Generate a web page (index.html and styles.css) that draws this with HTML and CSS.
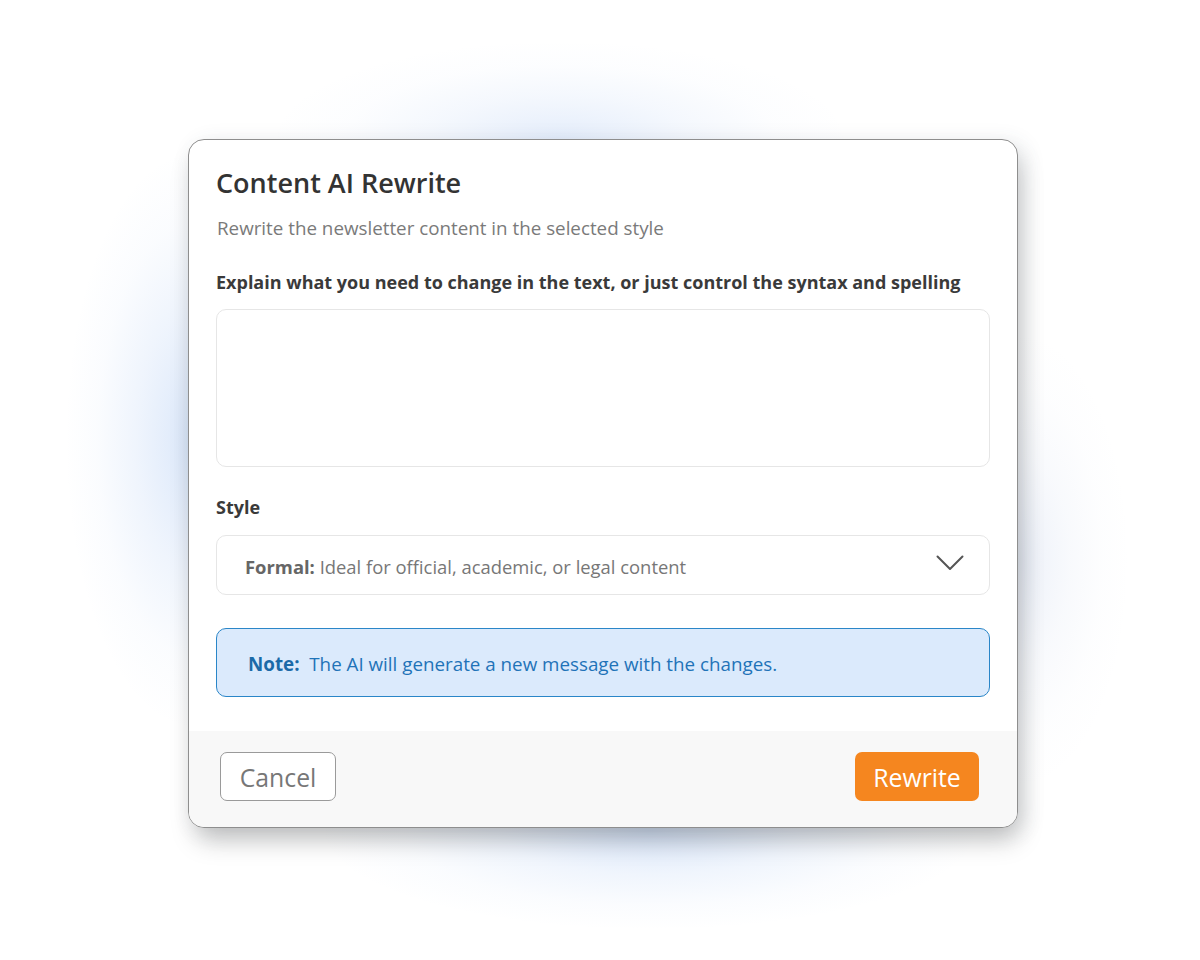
FILE: index.html
```html
<!DOCTYPE html>
<html lang="en">
<head>
<meta charset="utf-8">
<title>Content AI Rewrite</title>
<link rel="stylesheet" href="styles.css">
</head>
<body>
<div class="stage">
  <div class="modal">
    <div class="body">
      <h1 class="title">Content AI Rewrite</h1>
      <p class="subtitle">Rewrite the newsletter content in the selected style</p>
      <label class="label">Explain what you need to change in the text, or just control the syntax and spelling</label>
      <div class="textarea"></div>
      <label class="label label-style">Style</label>
      <div class="select">
        <span class="select-text"><b>Formal:</b> Ideal for official, academic, or legal content</span>
        <svg class="chev" width="28" height="16" viewBox="0 0 28 16" aria-hidden="true"><path d="M1.5 1.5 L14 14 L26.5 1.5" fill="none" stroke="#555" stroke-width="2" stroke-linecap="round" stroke-linejoin="round"/></svg>
      </div>
      <div class="note"><b>Note:</b>&nbsp; The AI will generate a new message with the changes.</div>
    </div>
    <div class="footer">
      <button class="btn btn-cancel">Cancel</button>
      <button class="btn btn-primary">Rewrite</button>
    </div>
  </div>
</div>
</body>
</html>
```
FILE: styles.css
```css
html, body {
  margin: 0;
  padding: 0;
  background: #ffffff;
}
body {
  font-family: "Open Sans", "Noto Sans", "Liberation Sans", sans-serif;
  width: 1200px;
  height: 960px;
  overflow: hidden;
}
.stage {
  box-sizing: border-box;
  width: 1200px;
  height: 960px;
  padding-top: 139px;
  padding-left: 188px;
  background:
    radial-gradient(ellipse 130px 290px at 195px 440px, rgba(110, 160, 235, 0.26) 0%, rgba(110, 160, 235, 0.11) 45%, rgba(110, 160, 235, 0.03) 75%, rgba(110, 160, 235, 0) 100%),
    radial-gradient(ellipse 290px 100px at 560px 140px, rgba(120, 165, 235, 0.2) 0%, rgba(120, 165, 235, 0.08) 45%, rgba(120, 165, 235, 0.02) 75%, rgba(120, 165, 235, 0) 100%),
    radial-gradient(ellipse 330px 100px at 650px 830px, rgba(110, 160, 235, 0.26) 0%, rgba(110, 160, 235, 0.1) 45%, rgba(110, 160, 235, 0.03) 75%, rgba(110, 160, 235, 0) 100%),
    radial-gradient(ellipse 110px 230px at 1020px 560px, rgba(140, 165, 215, 0.16) 0%, rgba(140, 165, 215, 0.06) 45%, rgba(140, 165, 215, 0.015) 75%, rgba(140, 165, 215, 0) 100%),
    #ffffff;
}
.modal {
  width: 830px;
  height: 689px;
  box-sizing: border-box;
  border: 1.5px solid #8e8e8e;
  border-radius: 16px;
  background: #ffffff;
  overflow: hidden;
  display: flex;
  flex-direction: column;
  box-shadow:
    4px 16px 26px -4px rgba(0, 0, 0, 0.22),
    6px 4px 22px rgba(60, 70, 90, 0.12);
}
.body {
  padding: 27px 27px 0 27px;
  display: flex;
  flex-direction: column;
  flex: 1;
}
.title {
  margin: 0;
  font-size: 27px;
  line-height: 32px;
  font-weight: 600;
  color: #333333;
}
.subtitle {
  margin: 17px 0 0 1px;
  font-size: 18.8px;
  line-height: 24px;
  color: #7a7a7a;
}
.label {
  display: block;
  margin-top: 30px;
  font-size: 18px;
  line-height: 24px;
  font-weight: 700;
  color: #3a3a3a;
}
.label-style {
  margin-top: 28px;
}
.textarea {
  margin-top: 15px;
  height: 158px;
  box-sizing: border-box;
  border: 1.5px solid #e6e6e6;
  border-radius: 10px;
  background: #ffffff;
}
.select {
  margin-top: 16px;
  height: 60px;
  box-sizing: border-box;
  border: 1.5px solid #e6e6e6;
  border-radius: 10px;
  display: flex;
  align-items: center;
  justify-content: space-between;
  padding: 0 25px 0 28px;
}
.select-text {
  font-size: 18.4px;
  color: #777777;
  padding-top: 2px;
}
.select-text b {
  color: #666666;
  font-weight: 700;
}
.chev {
  display: block;
  margin-top: -4px;
}
.note {
  margin-top: 33px;
  height: 69px;
  box-sizing: border-box;
  border: 1.5px solid #2a86c8;
  border-radius: 10px;
  background: #dbeafc;
  color: #1f73b8;
  font-size: 18.8px;
  display: flex;
  align-items: center;
  padding-left: 31px;
  padding-top: 2px;
}
.note b {
  font-weight: 700;
  color: #1b6aa8;
}
.footer {
  height: 96px;
  background: #f8f8f8;
  box-sizing: border-box;
  display: flex;
  align-items: flex-start;
  justify-content: space-between;
  padding: 21px 38px 0 31px;
}
.btn {
  font-family: inherit;
  height: 49px;
  border-radius: 7px;
  font-size: 24.8px;
  padding: 0;
  cursor: pointer;
}
.btn-cancel {
  background: #ffffff;
  border: 1.5px solid #9a9a9a;
  color: #777777;
  width: 116px;
}
.btn-primary {
  background: #f5861f;
  border: none;
  color: #ffffff;
  width: 124px;
}
```
